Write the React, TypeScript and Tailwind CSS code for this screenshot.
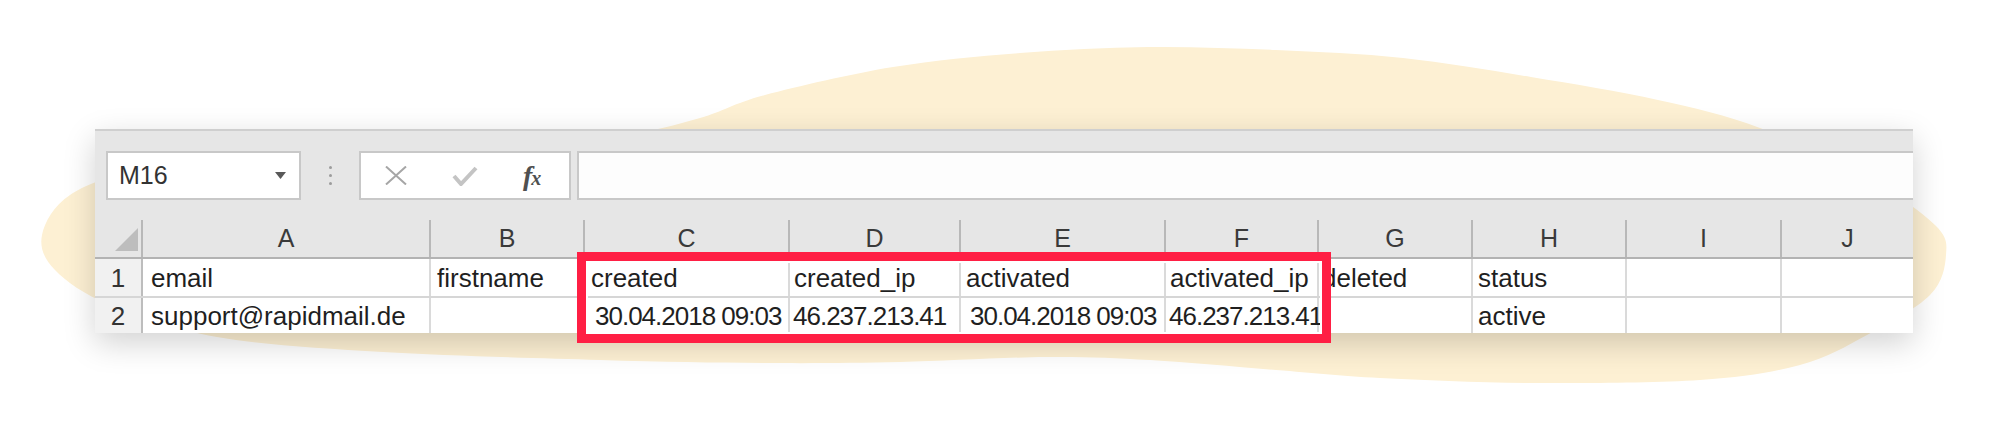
import React from "react";

const cols = ["A", "B", "C", "D", "E", "F", "G", "H", "I", "J"];

// grid columns: row header, A..J
const gridCols =
  "grid grid-cols-[48px_288px_154px_205px_171px_205px_153px_154px_154px_155px_131px]";

type Cell = { text?: string; pl?: string; num?: boolean };

const row1: Cell[] = [
  { text: "email", pl: "pl-[8px]" },
  { text: "firstname", pl: "pl-[6px]" },
  { text: "created", pl: "pl-[6px]" },
  { text: "created_ip", pl: "pl-[4px]" },
  { text: "activated", pl: "pl-[5px]" },
  { text: "activated_ip", pl: "pl-[4px]" },
  { text: "deleted", pl: "pl-[3px]" },
  { text: "status", pl: "pl-[5px]" },
  {},
  {},
];

const row2: Cell[] = [
  { text: "support@rapidmail.de", pl: "pl-[8px]" },
  {},
  { text: "30.04.2018 09:03", pl: "pl-[10px]", num: true },
  { text: "46.237.213.41", pl: "pl-[3px]", num: true },
  { text: "30.04.2018 09:03", pl: "pl-[9px]", num: true },
  { text: "46.237.213.41", pl: "pl-[3px]", num: true },
  {},
  { text: "active", pl: "pl-[5px]" },
  {},
  {},
];

// background blob outline
const blobPts = [
  [42, 235], [70, 195], [140, 172], [300, 158], [500, 148], [620, 136],
  [700, 118], [765, 95], [893, 67], [1020, 53], [1148, 47], [1276, 50],
  [1403, 58], [1531, 77], [1658, 100], [1760, 128], [1870, 180], [1935, 225],
  [1946, 255], [1930, 295], [1867, 335], [1800, 365], [1700, 380], [1531, 383],
  [1380, 378], [1276, 370], [1150, 360], [1046, 357], [900, 362], [765, 363],
  [600, 360], [383, 352], [217, 337], [110, 305], [55, 270],
];

function smoothPath(pts: number[][]) {
  const n = pts.length;
  let d = `M${pts[0][0]},${pts[0][1]}`;
  for (let i = 0; i < n; i++) {
    const p0 = pts[(i - 1 + n) % n];
    const p1 = pts[i];
    const p2 = pts[(i + 1) % n];
    const p3 = pts[(i + 2) % n];
    const c1x = p1[0] + (p2[0] - p0[0]) / 6;
    const c1y = p1[1] + (p2[1] - p0[1]) / 6;
    const c2x = p2[0] - (p3[0] - p1[0]) / 6;
    const c2y = p2[1] - (p3[1] - p1[1]) / 6;
    d += ` C${c1x},${c1y} ${c2x},${c2y} ${p2[0]},${p2[1]}`;
  }
  return d + "Z";
}

const DataRow = ({ n, cells, last }: { n: string; cells: Cell[]; last?: boolean }) => (
  <div
    className={`${gridCols} ${
      last ? "h-[35px]" : "h-[39px] border-b-2 border-[#d6d6d6]"
    } bg-white`}
  >
    <div
      className={`flex items-end justify-center ${
        last ? "pb-[4px]" : "pb-[5px]"
      } bg-[#f1f1f1] border-r-2 border-[#bdbdbd] text-[26px] leading-none text-[#333]`}
    >
      {n}
    </div>
    {cells.map((c, i) => (
      <div
        key={i}
        className={`flex items-end whitespace-nowrap ${
          last ? "pb-[4px]" : "pb-[5px]"
        } ${c.pl ?? ""} ${i < 9 ? "border-r-2 border-[#dadada]" : ""} text-[26px] leading-none text-[#1f1f1f] ${
          c.num ? "tracking-[-1px]" : ""
        }`}
      >
        {c.text}
      </div>
    ))}
  </div>
);

export default function App() {
  return (
    <div className="relative w-[2000px] h-[431px] bg-white overflow-hidden pt-[129px] pl-[95px] font-['Liberation_Sans',Arial,sans-serif]">
      <svg
        className="absolute inset-0"
        width="2000"
        height="431"
        viewBox="0 0 2000 431"
      >
        <path d={smoothPath(blobPts)} fill="#fdf0d3" />
      </svg>

      <div className="relative w-[1818px] shadow-[0_10px_30px_rgba(0,0,0,0.18)]">
        <div className="bg-[#e6e6e6] border-t-2 border-[#cfcfcf]">
          <div className="h-[20px]" />
          {/* name box + formula bar */}
          <div className="flex h-[49px] pl-[11px]">
            <div className="w-[195px] flex items-center justify-between pl-[11px] pr-[13px] bg-white border-2 border-[#c8c8c8]">
              <span className="text-[25px] leading-none text-[#333]">M16</span>
              <svg width="11" height="7" viewBox="0 0 11 7">
                <polygon points="0,0 11,0 5.5,7" fill="#595959" />
              </svg>
            </div>
            <div className="w-[58px] flex flex-col items-center justify-center gap-[5px]">
              <span className="w-[3px] h-[3px] rounded-full bg-[#9c9c9c]" />
              <span className="w-[3px] h-[3px] rounded-full bg-[#9c9c9c]" />
              <span className="w-[3px] h-[3px] rounded-full bg-[#9c9c9c]" />
            </div>
            <div className="w-[212px] flex items-center gap-[45px] pl-[24px] bg-white border-2 border-[#c8c8c8]">
              <svg width="22" height="19" viewBox="0 0 22 19">
                <path d="M1 0.5 L21 18.5 M21 0.5 L1 18.5" stroke="#a6a6a6" strokeWidth="2" fill="none" />
              </svg>
              <svg width="26" height="20" viewBox="0 0 26 20">
                <polyline points="2,10 9,18 24,2" stroke="#c4c4c4" strokeWidth="4" fill="none" />
              </svg>
              <span className="flex items-baseline font-['Liberation_Serif',serif] italic font-bold text-[#505050] leading-none">
                <span className="text-[28px]">f</span>
                <span className="text-[20px] -ml-[1px]">x</span>
              </span>
            </div>
            <div className="flex-1 ml-[6px] bg-[#fdfdfd] border-2 border-r-0 border-[#c8c8c8]" />
          </div>
          <div className="h-[20px]" />
          {/* column headers */}
          <div className={`${gridCols} h-[39px] border-b-2 border-[#b3b3b3]`}>
            <div className="relative border-r-2 border-[#b8b8b8]">
              <svg className="absolute left-[20px] top-[8px]" width="23" height="23" viewBox="0 0 23 23">
                <polygon points="23,0 23,23 0,23" fill="#bdbdbd" />
              </svg>
            </div>
            {cols.map((c, i) => (
              <div
                key={c}
                className={`flex items-end justify-center pb-[6px] ${
                  i < 9 ? "border-r-2 border-[#b8b8b8]" : ""
                } text-[25px] leading-none text-[#3a3a3a]`}
              >
                {c}
              </div>
            ))}
          </div>
        </div>
        <DataRow n="1" cells={row1} />
        <DataRow n="2" cells={row2} last />

        {/* highlight frame */}
        <div className="absolute left-[482px] top-[123px] w-[754px] h-[91px] border-[9px] border-[#ff1f44] shadow-[inset_0_0_0_2px_#ffffff] z-10" />
      </div>
    </div>
  );
}
